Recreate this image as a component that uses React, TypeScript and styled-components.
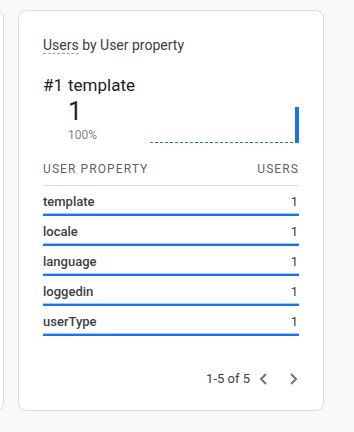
import React from "react";
import styled, { createGlobalStyle } from "styled-components";

const GlobalStyle = createGlobalStyle`
  html, body {
    margin: 0;
    padding: 0;
    background: #f8f9fa;
    font-family: Roboto, "Liberation Sans", Arial, sans-serif;
  }
`;

const Page = styled.div`
  width: 354px;
  height: 432px;
  box-sizing: border-box;
  display: flex;
  justify-content: flex-end;
  gap: 14px;
  padding: 10px 30px 0 0;
  overflow: hidden;
`;

const Card = styled.div<{ $width: number }>`
  flex: 0 0 auto;
  width: ${(p) => p.$width}px;
  height: 401px;
  box-sizing: border-box;
  background: #fff;
  border: 1px solid #dadce0;
  border-radius: 8px;
  padding: 24px 24px 21px 24px;
  display: flex;
  flex-direction: column;
`;

const Title = styled.div`
  font-size: 14px;
  line-height: 20px;
  color: #3c4043;
  span {
    border-bottom: 1px dashed #9aa0a6;
  }
`;

const TopRow = styled.div`
  margin-top: 18px;
  display: grid;
  grid-template-columns: 25px 1fr;
  font-size: 17px;
  line-height: 24px;
  color: #202124;
`;

const Stats = styled.div`
  display: flex;
  align-items: flex-end;
  justify-content: space-between;
`;

const Figure = styled.div`
  display: flex;
  flex-direction: column;
`;

const BigNumber = styled.div`
  font-size: 25px;
  line-height: 30px;
  font-weight: 400;
  color: #202124;
`;

const Percent = styled.div`
  font-size: 12px;
  line-height: 16px;
  color: #80868b;
`;

const Chart = styled.svg`
  display: block;
  margin-bottom: 0;
`;

const Table = styled.div`
  margin-top: 18px;
  display: flex;
  flex-direction: column;
`;

const HeadRow = styled.div`
  display: flex;
  justify-content: space-between;
  font-size: 12px;
  line-height: 16px;
  font-weight: 400;
  letter-spacing: 1.1px;
  color: #5f6368;
  padding-bottom: 8px;
  border-bottom: 1px solid #dadce0;
`;

const Row = styled.div`
  padding-top: 6px;
`;

const RowText = styled.div`
  display: flex;
  justify-content: space-between;
  font-size: 13px;
  line-height: 20px;
  color: #3c4043;
  margin-bottom: 1px;
`;

const Name = styled.span`
  font-weight: 500;
`;

const Value = styled.span`
  font-weight: 400;
  padding-right: 1px;
`;

const Bar = styled.div<{ $pct: number }>`
  height: 2px;
  width: ${(p) => p.$pct}%;
  background: #1a73e8;
  border-top: 1px solid #a9c9f5;
`;

const Pager = styled.div`
  margin-top: auto;
  display: flex;
  align-items: center;
  justify-content: flex-end;
  gap: 8px;
  font-size: 13px;
  line-height: 20px;
  color: #3c4043;
`;

const Arrows = styled.div`
  display: flex;
  gap: 21px;
  color: #757575;
`;

const ArrowBtn = styled.svg`
  display: block;
`;

const rows = [
  { name: "template", users: 1 },
  { name: "locale", users: 1 },
  { name: "language", users: 1 },
  { name: "loggedin", users: 1 },
  { name: "userType", users: 1 },
];

const Chevron = ({ dir }: { dir: "left" | "right" }) => (
  <ArrowBtn width="10" height="14" viewBox="0 0 10 14">
    <path
      d={dir === "left" ? "M8 2 L3 7 L8 12" : "M2 2 L7 7 L2 12"}
      fill="none"
      stroke="currentColor"
      strokeWidth="2"
    />
  </ArrowBtn>
);

export default function App() {
  return (
    <>
      <GlobalStyle />
      <Page>
        <Card $width={300} />
        <Card $width={306}>
          <Title>
            <span>Users</span> by User property
          </Title>
          <TopRow>
            <span>#1</span>
            <span>template</span>
            <span />
            <Stats>
              <Figure>
                <BigNumber>1</BigNumber>
                <Percent>100%</Percent>
              </Figure>
              <Chart width="149" height="36" viewBox="0 0 149 36">
                <line x1="0" y1="35.5" x2="146" y2="35.5" stroke="#1a73e8" strokeWidth="1" strokeDasharray="3 2" />
                <rect x="145" y="0" width="4" height="36" fill="#1a73e8" />
              </Chart>
            </Stats>
          </TopRow>
          <Table>
            <HeadRow>
              <span>USER PROPERTY</span>
              <span>USERS</span>
            </HeadRow>
            {rows.map((r) => (
              <Row key={r.name}>
                <RowText>
                  <Name>{r.name}</Name>
                  <Value>{r.users}</Value>
                </RowText>
                <Bar $pct={100} />
              </Row>
            ))}
          </Table>
          <Pager>
            <span>1-5 of 5</span>
            <Arrows>
              <Chevron dir="left" />
              <Chevron dir="right" />
            </Arrows>
          </Pager>
        </Card>
      </Page>
    </>
  );
}
